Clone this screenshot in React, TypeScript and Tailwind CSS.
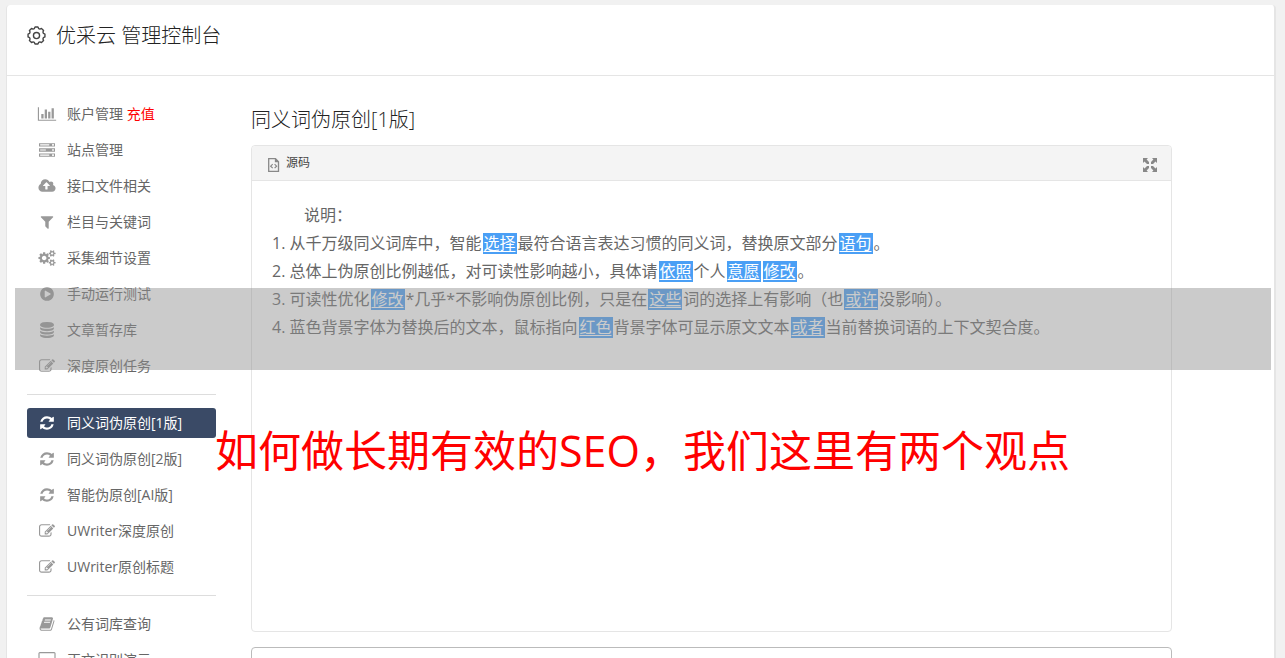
import React from "react";

const paths = {
  chart: ["0 0 2048 1792", "M640 896v512h-256v-512h256zm384-512v1024h-256v-1024h256zm1024 1152v128h-2048v-1536h128v1408h1920zm-640-896v768h-256v-768h256zm384-384v1152h-256v-1152h256z"],
  cloud: ["0 0 1920 1792", "M1280 864q0-14-9-23l-352-352q-9-9-23-9t-23 9l-351 351q-10 12-10 24 0 14 9 23t23 9h224v352q0 13 9.500 22.500t22.500 9.500h192q13 0 22.500-9.500t9.500-22.500v-352h224q13 0 22.500-9.500t9.500-22.500zm640 288q0 159-112.500 271.500t-271.500 112.500h-1088q-185 0-316.500-131.500t-131.500-316.500q0-130 70-240t188-165q-2-30-2-43 0-212 150-362t362-150q156 0 285.500 87t188.500 231q71-62 166-62 106 0 181 75t75 181q0 76-41 138 130 31 213.500 135.500t83.500 238.500z"],
  server: ["0 0 1792 1792", "M0 128h1792v384H0zM0 704h1792v384H0zM0 1280h1792v384H0zM128 256v128h1024V256zM128 832v128h640V832zM128 1408v128h1024v-128zM1472 224v192h192V224zM1472 800v192h192V800zM1472 1376v192h192v-192z"],
  filter: ["0 0 1792 1792", "M1595 295q17 41-14 70l-493 493v742q0 42-39 59-13 5-25 5-27 0-45-19l-256-256q-19-19-19-45v-486l-493-493q-31-29-14-70 17-39 59-39h1280q42 0 59 39z"],
  cogs: ["0 0 1920 1792", "M896 896q0-106-75-181t-181-75-181 75-75 181 75 181 181 75 181-75 75-181zm768 512q0-52-38-90t-90-38-90 38-38 90q0 53 37.500 90.500t90.500 37.500 90.500-37.500 37.500-90.500zm0-1024q0-52-38-90t-90-38-90 38-38 90q0 53 37.500 90.500t90.500 37.500 90.500-37.500 37.500-90.500zm-384 421v185q0 10-7 19.500t-16 10.500l-155 24q-11 35-32 76 34 48 90 115 7 11 7 20 0 12-7 19-23 30-82.500 89.500t-78.500 59.500q-11 0-21-7l-115-90q-37 19-77 31-11 108-23 155-7 24-30 24h-186q-11 0-20-7.500t-10-17.500l-23-153q-34-10-75-31l-118 89q-7 7-20 7-11 0-21-8-144-133-144-160 0-9 7-19 10-14 41-53t47-61q-23-44-35-82l-152-24q-10-1-17-9.500t-7-19.500v-185q0-10 7-19.500t16-10.500l155-24q11-35 32-76-34-48-90-115-7-11-7-20 0-12 7-20 22-30 82-89t79-59q11 0 21 7l115 90q34-18 77-32 11-108 23-154 7-24 30-24h186q11 0 20 7.500t10 17.500l23 153q34 10 75 31l118-89q8-7 20-7 11 0 21 8 144 133 144 160 0 8-7 19-12 16-42 54t-45 60q23 48 34 82l152 23q10 2 17 10.500t7 19.500zm640 533v140q0 16-149 31-12 27-30 52 51 113 51 138 0 4-4 7-122 71-124 71-8 0-46-47t-52-68q-20 2-30 2t-30-2q-14 21-52 68t-46 47q-2 0-124-71-4-3-4-7 0-25 51-138-18-25-30-52-149-15-149-31v-140q0-16 149-31 13-29 30-52-51-113-51-138 0-4 4-7 4-2 35-20t59-34 30-16q8 0 46 46.500t52 67.500q20-2 30-2t30 2q51-71 92-112l6-2q4 0 124 70 4 3 4 7 0 25-51 138 17 23 30 52 149 15 149 31zm0-1024v140q0 16-149 31-12 27-30 52 51 113 51 138 0 4-4 7-122 71-124 71-8 0-46-47t-52-68q-20 2-30 2t-30-2q-14 21-52 68t-46 47q-2 0-124-71-4-3-4-7 0-25 51-138-18-25-30-52-149-15-149-31v-140q0-16 149-31 13-29 30-52-51-113-51-138 0-4 4-7 4-2 35-20t59-34 30-16q8 0 46 46.500t52 67.500q20-2 30-2t30 2q51-71 92-112l6-2q4 0 124 70 4 3 4 7 0 25-51 138 17 23 30 52 149 15 149 31z"],
  play: ["0 0 1792 1792", "M896 128q209 0 385.500 103t279.500 279.500 103 385.500-103 385.500-279.500 279.500-385.500 103-385.500-103-279.500-279.500-103-385.500 103-385.500 279.500-279.500 385.500-103zm384 823q32-18 32-55t-32-55l-544-320q-31-19-64-1-32 19-32 56v640q0 37 32 56 16 8 32 8 17 0 32-9z"],
  database: ["0 0 1792 1792", "M896 768q237 0 443-43t325-127v170q0 69-103 128t-280 93.500-385 34.500-385-34.500-280-93.500-103-128v-170q119 84 325 127t443 43zm0 768q237 0 443-43t325-127v170q0 69-103 128t-280 93.500-385 34.500-385-34.500-280-93.500-103-128v-170q119 84 325 127t443 43zm0-384q237 0 443-43t325-127v170q0 69-103 128t-280 93.500-385 34.500-385-34.500-280-93.500-103-128v-170q119 84 325 127t443 43zm0-1152q208 0 385 34.500t280 93.500 103 128v128q0 69-103 128t-280 93.500-385 34.500-385-34.500-280-93.500-103-128v-128q0-69 103-128t280-93.500 385-34.500z"],
  refresh: ["0 0 1792 1792", "M1639 1056q0 5-1 7-64 268-268 434.500t-478 166.500q-146 0-282.500-55t-243.500-157l-129 129q-19 19-45 19t-45-19-19-45v-448q0-26 19-45t45-19h448q26 0 45 19t19 45-19 45l-137 137q71 66 161 102t187 36q134 0 250-65t186-179q11-17 53-117 8-23 30-23h192q13 0 22.500 9.500t9.500 22.500zm25-800v448q0 26-19 45t-45 19h-448q-26 0-45-19t-19-45 19-45l138-138q-148-137-349-137-134 0-250 65t-186 179q-11 17-53 117-8 23-30 23h-199q-13 0-22.500-9.500t-9.500-22.500v-7q65-268 270-434.500t480-166.500q146 0 284 55.500t245 156.500l130-129q19-19 45-19t45 19 19 45z"],
  edit: ["0 0 1792 1792", "M888 1184l116-116-152-152-116 116v56h96v96h56zm440-720q-16-16-33 1l-350 350q-17 17-1 33t33-1l350-350q17-17 1-33zm80 594v190q0 119-84.500 203.500t-203.500 84.500h-832q-119 0-203.500-84.500t-84.500-203.500v-832q0-119 84.500-203.500t203.500-84.500h832q63 0 117 25 15 7 18 23 3 17-9 29l-49 49q-14 14-32 8-23-6-45-6h-832q-66 0-113 47t-47 113v832q0 66 47 113t113 47h832q66 0 113-47t47-113v-126q0-13 9-22l64-64q15-15 35-7t20 29zm-96-738l288 288-672 672h-288v-288zm444 132l-92 92-288-288 92-92q28-28 68-28t68 28l152 152q28 28 28 68t-28 68z"],
  book: ["0 0 1792 1792", "M1703 478q40 57 18 129l-275 906q-19 64-76.500 107.500t-122.500 43.500h-923q-77 0-148.500-53.500t-99.500-131.500q-24-67-2-127 0-4 3-27t4-37q1-8-3-21.500t-3-19.500q2-11 8-21t16.500-23.500 16.500-23.500q23-38 45-91.500t30-91.500q3-10 .5-30t-.5-28q3-11 17-28t17-23q21-36 42-92t25-90q1-9-2.500-32t.5-28q4-13 22-30.500t22-22.500q19-26 42.500-84.500t27.500-96.500q1-8-3-25.500t-2-26.500q2-8 9-18t18-23 17-21q8-12 16.500-30.500t15-35 16-36 19.500-32 26.500-23.500 36-11.500 47.500 5.500l-1 3q38-9 51-9h761q74 0 114 56t18 130l-274 906q-36 119-71.500 153.500t-128.500 34.500h-869q-27 0-38 15-11 16-1 43 24 70 144 70h923q29 0 56-15.500t35-41.500l300-987q7-22 5-57 38 15 59 43zm-1064 2q-4 13 2 22.500t20 9.500h608q13 0 25.500-9.500t16.500-22.500l21-64q4-13-2-22.500t-20-9.500h-608q-13 0-25.500 9.500t-16.500 22.500zm-83 256q-4 13 2 22.500t20 9.500h608q13 0 25.500-9.500t16.500-22.500l21-64q4-13-2-22.500t-20-9.500h-608q-13 0-25.500 9.500t-16.500 22.500z"],
  desktop: ["0 0 1920 1792", "M1792 992v-832q0-13-9.500-22.500t-22.500-9.500h-1600q-13 0-22.500 9.500t-9.500 22.500v832q0 13 9.500 22.500t22.500 9.500h1600q13 0 22.500-9.500t9.500-22.500zm128-832v1088q0 66-47 113t-113 47h-544q0 37 16 77.500t32 71 16 43.500q0 26-19 45t-45 19h-512q-26 0-45-19t-19-45q0-14 16-44t32-70 16-78h-544q-66 0-113-47t-47-113v-1088q0-66 47-113t113-47h1600q66 0 113 47t47 113z"],
} as const;

type IconName = keyof typeof paths;
type Item = { icon: IconName; label: string; extra?: string; active?: boolean };

const groups: Item[][] = [
  [
    { icon: "chart", label: "账户管理", extra: "充值" },
    { icon: "server", label: "站点管理" },
    { icon: "cloud", label: "接口文件相关" },
    { icon: "filter", label: "栏目与关键词" },
    { icon: "cogs", label: "采集细节设置" },
    { icon: "play", label: "手动运行测试" },
    { icon: "database", label: "文章暂存库" },
    { icon: "edit", label: "深度原创任务" },
  ],
  [
    { icon: "refresh", label: "同义词伪原创[1版]", active: true },
    { icon: "refresh", label: "同义词伪原创[2版]" },
    { icon: "refresh", label: "智能伪原创[AI版]" },
    { icon: "edit", label: "UWriter深度原创" },
    { icon: "edit", label: "UWriter原创标题" },
  ],
  [
    { icon: "book", label: "公有词库查询" },
    { icon: "desktop", label: "正文识别演示" },
  ],
];

function Icon({ name }: { name: IconName }) {
  return (
    <svg viewBox={paths[name][0]} className="h-4 w-5 shrink-0" fill="currentColor" fillRule={name === "server" ? "evenodd" : "nonzero"} aria-hidden="true">
      <path d={paths[name][1]} />
    </svg>
  );
}

function MenuItem({ icon, label, extra, active }: Item) {
  return (
    <li>
      <a
        href="#"
        className={
          active
            ? "flex h-[30px] items-center gap-[10px] rounded-[3px] bg-[#3a4a66] pl-[10px] text-white"
            : "flex h-[30px] items-center gap-[10px] rounded-[3px] pl-[10px] text-[#666]"
        }
      >
        <span className={active ? "text-white" : "text-[#999]"}>
          <Icon name={icon} />
        </span>
        <span>
          {label}
          {extra && <span className="text-[#f00]"> {extra}</span>}
        </span>
      </a>
    </li>
  );
}

function Swap({ children }: { children: string }) {
  return (
    <span className="mx-px inline-block border-b border-[#4a9ff5] bg-[#4a9ff5] px-px leading-5 text-white underline underline-offset-2">
      {children}
    </span>
  );
}

function GearIcon() {
  return (
    <svg viewBox="0 0 18 18" className="mb-[2px] size-[19px]" fill="none" stroke="#444" strokeWidth="1.3" strokeLinejoin="round" aria-hidden="true">
      <path d="M7 2.400L7.600 1H10.400L11 2.400L12.300 2.900L13.700 2.300L15.700 4.300L15.100 5.700L15.600 7L17 7.600V10.400L15.600 11L15.100 12.300L15.700 13.700L13.700 15.700L12.300 15.100L11 15.600L10.400 17H7.600L7 15.600L5.700 15.100L4.300 15.700L2.300 13.700L2.900 12.300L2.400 11L1 10.400V7.600L2.400 7L2.900 5.700L2.300 4.300L4.300 2.300L5.700 2.900Z" />
      <circle cx="9" cy="9" r="2.900" />
    </svg>
  );
}

export default function App() {
  return (
    <div className="relative h-screen overflow-hidden bg-[#f1f1f1] pt-[5px] pr-[9px] pl-[6px] font-['Open_Sans','Noto_Sans_CJK_SC',sans-serif] text-sm text-[#666]">
      <div className="min-h-full rounded-t border border-t-0 border-r-2 border-[#e5e5e5] bg-white">
        <header className="flex h-[71px] items-center gap-[10px] border-b border-[#e5e5e5] pb-2 pl-5">
          <GearIcon />
          <h1 className="text-xl font-light text-[#222]">优采云 管理控制台</h1>
        </header>

        <div className="flex">
          <nav className="ml-5 w-[189px] shrink-0 pt-[23px]">
            {groups.map((group, i) => (
              <ul
                key={i}
                className={i > 0 ? "mt-[13px] flex flex-col gap-[6px] border-t border-[#ddd] pt-[13px]" : "flex flex-col gap-[6px]"}
              >
                {group.map((item) => (
                  <MenuItem key={item.label} {...item} />
                ))}
              </ul>
            ))}
          </nav>

          <main className="ml-[35px] min-w-0 flex-1 pt-7">
            <div className="w-9/10">
              <h2 className="mb-[9px] text-xl leading-8 font-light text-[#222]">同义词伪原创[1版]</h2>

              <section className="rounded border border-[#e5e5e5]">
                <div className="flex h-[35px] items-center justify-between rounded-t border-b border-[#e5e5e5] bg-[#f4f4f4] pr-[14px] pl-[15px]">
                  <button type="button" className="flex items-center gap-[6px] text-xs text-[#444]">
                    <svg viewBox="0 0 13 14" className="mt-1 h-[14px] w-[13px]" fill="none" stroke="#888" aria-hidden="true">
                      <path strokeWidth="1.3" d="M1.700.7h6.800l3 3v9.600H1.700zM8.500.7v3h3" />
                      <path strokeWidth="1.200" d="M5.700 6.200 3.700 8.200l2 2M7.600 6.200l2 2-2 2" />
                    </svg>
                    源码
                  </button>
                  <button type="button" aria-label="全屏" className="mt-1">
                    <svg viewBox="0 0 14 14" className="size-[14px]" fill="#888" aria-hidden="true">
                      <path d="M0 0h5L3.600 1.500 6 4v2H4L1.500 3.600 0 5zM14 0v5l-1.500-1.400L10 6H8V4l2.400-2.500L9 0zM0 14V9l1.500 1.400L4 8h2v2l-2.400 2.500L5 14zM14 14H9l1.400-1.500L8 10V8h2l2.500 2.400L14 9z" />
                    </svg>
                  </button>
                </div>
                <div className="min-h-[450px] px-5 pt-5 text-base leading-7 text-[#666]">
                  <p className="pl-8">说明：</p>
                  <ol className="list-none">
                    <li>1. 从千万级同义词库中，智能<Swap>选择</Swap>最符合语言表达习惯的同义词，替换原文部分<Swap>语句</Swap>。</li>
                    <li>2. 总体上伪原创比例越低，对可读性影响越小，具体请<Swap>依照</Swap>个人<Swap>意愿</Swap><Swap>修改</Swap>。</li>
                    <li>3. 可读性优化<Swap>修改</Swap>*几乎*不影响伪原创比例，只是在<Swap>这些</Swap>词的选择上有影响（也<Swap>或许</Swap>没影响）。</li>
                    <li>4. 蓝色背景字体为替换后的文本，鼠标指向<Swap>红色</Swap>背景字体可显示原文文本<Swap>或者</Swap>当前替换词语的上下文契合度。</li>
                  </ol>
                </div>
              </section>

              <section className="mt-[15px] h-20 rounded border border-[#bbb]" />
            </div>
          </main>
        </div>
      </div>

      <div className="pointer-events-none absolute top-[288px] right-[14px] left-[15px] h-[82px] bg-[#919191]/47" />
      <p className="pointer-events-none absolute top-[421px] left-[215px] text-[43px] leading-[60px] whitespace-nowrap text-[#f00]">
        如何做长期有效的SEO，我们这里有两个观点
      </p>
    </div>
  );
}
